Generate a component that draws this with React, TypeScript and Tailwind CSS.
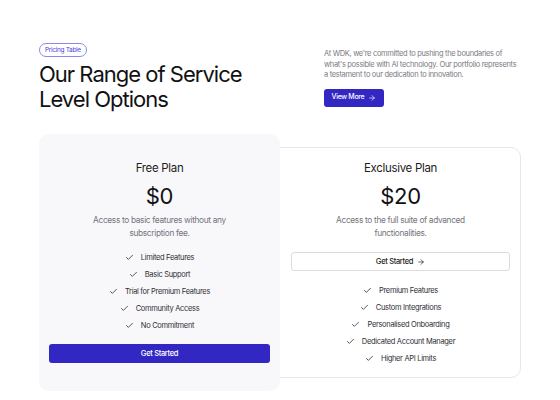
import { ArrowRight, Check } from "lucide-react";

interface PlanProps {
  title: string;
  price: string;
  desc: string[];
  features: string[];
  featured?: boolean;
}

function PlanCard({ title, price, desc, features, featured }: PlanProps) {
  return (
    <div
      className={
        featured
          ? "relative z-10 w-[241px] rounded-[10px] bg-[#f8f8fa] px-[10px] pt-[27px] pb-[28px]"
          : "-ml-[10px] w-[251px] rounded-[10px] border border-[#e7e7ea] bg-white pl-[20px] pr-[10px] pt-[13px] pb-[10px]"
      }
    >
      <h3 className="text-center text-[11.5px] leading-[14px] text-[#1d1d22]">{title}</h3>
      <p className="mt-[8px] text-center text-[22px] leading-[26px] text-[#111114]">{price}</p>
      <div className="mt-[5px] text-center text-[8.3px] leading-[13px] text-[#74747c]">
        {desc.map((d) => (
          <p key={d}>{d}</p>
        ))}
      </div>
      {featured ? null : (
        <button className="mt-[12px] flex h-[19px] w-full items-center justify-center gap-[4px] rounded-[3px] border border-[#dcdce0] bg-white text-[7.5px] font-medium text-[#1d1d22]">
          Get Started <ArrowRight size={8} strokeWidth={2} />
        </button>
      )}
      <ul className={featured ? "mt-[9px]" : "mt-[11px]"}>
        {features.map((f) => (
          <li key={f} className="flex h-[17px] items-center justify-center gap-[7px] text-[7.5px] text-[#2e2e34]">
            <Check size={9} strokeWidth={2} className="text-[#222]" />
            <span>{f}</span>
          </li>
        ))}
      </ul>
      {featured ? (
        <button className="mt-[10px] h-[19px] w-full rounded-[3px] bg-[#3327c4] text-[7.5px] font-medium text-white">
          Get Started
        </button>
      ) : null}
    </div>
  );
}

export default function App() {
  return (
    <div className="h-[400px] w-[560px] bg-white pl-[39px] pt-[43px] font-['Inter',sans-serif] tracking-[-0.02em]">
      <div className="flex">
        <div className="w-[285px]">
          <div className="flex h-[14px] w-fit items-center rounded-full border border-[#8f88ea] px-[5px] text-[6.5px] leading-none text-[#4a3fd6]">
            Pricing Table
          </div>
          <h1 className="mt-[5px] text-[22px] leading-[25px] tracking-[-0.045em] text-[#111114]">
            Our Range of Service
            <br />
            Level Options
          </h1>
        </div>
        <div className="w-[197px] pt-[6px]">
          <p className="text-[7.5px] leading-[10.5px] text-[#7a7a82]">
            At WDK, we're committed to pushing the boundaries of what's possible with AI technology. Our portfolio represents a testament to our dedication to innovation.
          </p>
          <button className="mt-[8px] flex h-[18px] w-[60px] items-center justify-center gap-[4px] rounded-[3px] bg-[#3327c4] text-[7px] font-medium text-white">
            View More <ArrowRight size={8} strokeWidth={2} />
          </button>
        </div>
      </div>
      <div className="mt-[22px] flex items-center">
        <PlanCard
          featured
          title="Free Plan"
          price="$0"
          desc={["Access to basic features without any", "subscription fee."]}
          features={["Limited Features", "Basic Support", "Trial for Premium Features", "Community Access", "No Commitment"]}
        />
        <PlanCard
          title="Exclusive Plan"
          price="$20"
          desc={["Access to the full suite of advanced", "functionalities."]}
          features={["Premium Features", "Custom Integrations", "Personalised Onboarding", "Dedicated Account Manager", "Higher API Limits"]}
        />
      </div>
    </div>
  );
}
